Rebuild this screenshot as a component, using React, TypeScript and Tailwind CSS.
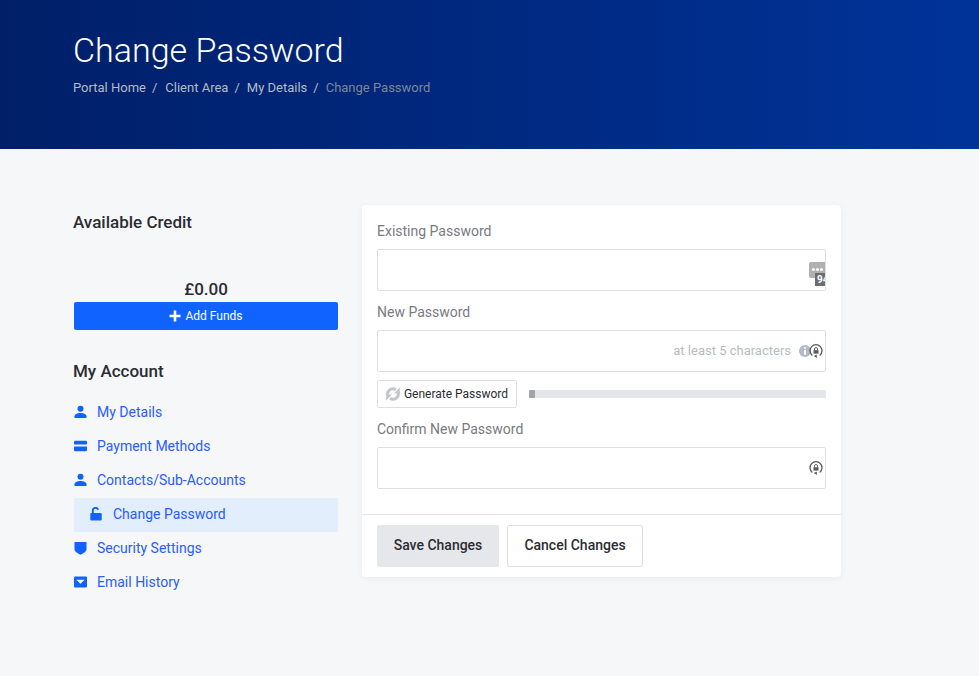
import React from "react";

const Person = () => (
  <svg viewBox="0 0 14 14" className="w-[14px] h-[14px]" fill="currentColor"><circle cx="6.500" cy="3.800" r="3" /><path d="M.5 13v-1.700C.5 9.300 3 8 6.500 8s6 1.300 6 3.300V13z" /></svg>
);
const Card = () => (
  <svg viewBox="0 0 14 14" className="w-[14px] h-[14px]" fill="currentColor"><path d="M1 1.800h11a1 1 0 0 1 1 1V5.500H0V2.800a1 1 0 0 1 1-1zM0 7.500h13v3.700a1 1 0 0 1-1 1H1a1 1 0 0 1-1-1z" /></svg>
);
const Lock = () => (
  <svg viewBox="0 0 12 14" className="w-[12px] h-[14px]" fill="currentColor"><path d="M1.300 6h9.400a1 1 0 0 1 1 1v5.500a1 1 0 0 1-1 1H1.300a1 1 0 0 1-1-1V7a1 1 0 0 1 1-1z" /><path d="M2.800 6V3.600a2.700 2.700 0 0 1 5.300-.8" fill="none" stroke="currentColor" strokeWidth="1.900" /></svg>
);
const Shield = () => (
  <svg viewBox="0 0 14 14" className="w-[14px] h-[14px]" fill="currentColor"><path d="M0.500 1h12v7.500c0 2-3.500 4-6 5.200-2.500-1.200-6-3.200-6-5.200z" /></svg>
);
const Mail = () => (
  <svg viewBox="0 0 14 14" className="w-[14px] h-[14px]" fill="currentColor"><path fillRule="evenodd" d="M1 1.500h11a1 1 0 0 1 1 1v9a1 1 0 0 1-1 1H1a1 1 0 0 1-1-1v-9a1 1 0 0 1 1-1zM2.300 4.800 6.500 8.800l4.200-4z" /></svg>
);
const PwLock = () => (
  <svg viewBox="0 0 14 14" className="w-[14px] h-[14px] text-[#5a5a5a]" fill="none" stroke="currentColor">
    <path d="M3.300 11.400A6 6 0 1 1 10.700 11.400" strokeWidth="1.300" />
    <path d="M7.800 14l-3-2 3-1.600z" fill="currentColor" stroke="none" />
    <path d="M4.500 6.200h5v3.400h-5z" fill="currentColor" stroke="none" />
    <path d="M5.500 6.200V5a1.500 1.500 0 0 1 3 0v1.200" strokeWidth="0.900" />
  </svg>
);

const Nav = ({ icon, label, active }: { icon: React.ReactNode; label: string; active?: boolean }) => (
  <a className={`flex items-center h-[34px] pb-[2px] text-[14px] text-[#2a5cff] ${active ? "bg-[#e2eefc] pl-[16px]" : ""}`}>
    <span className="w-[23px] flex items-center text-[#1063fe]">{icon}</span>
    {label}
  </a>
);

const Label = ({ children }: { children: React.ReactNode }) => (
  <label className="block text-[14px] leading-[20px] text-[#7a7a80]">{children}</label>
);

const Field = ({ children }: { children?: React.ReactNode }) => (
  <div className="relative h-[42px] mt-[8px] border border-[#dddfe2] rounded-[2px] bg-white">{children}</div>
);

export default function App() {
  return (
    <div className="min-h-[676px] bg-[#f6f7f9] font-['Roboto',sans-serif] overflow-hidden">
      <header className="h-[149px] bg-gradient-to-r from-[#001f68] to-[#003399] pl-[73px] pt-[29px]">
        <h1 className="text-[34px] leading-[42px] font-light text-white">Change Password</h1>
        <nav className="mt-[7px] flex text-[13px] leading-[20px] text-[#b5bbc9]">
          <span>Portal Home</span><span className="ml-[6px] mr-[8px]">/</span>
          <span>Client Area</span><span className="ml-[6px] mr-[7px]">/</span>
          <span>My Details</span><span className="ml-[6px] mr-[7px]">/</span>
          <span className="text-[#7d869c]">Change Password</span>
        </nav>
      </header>

      <main className="flex gap-[24px] pl-[74px] pt-[56px]">
        <aside className="w-[264px]">
          <h3 className="text-[17px] leading-[24px] pt-[5px] font-medium text-[#2b2c33] -ml-[1px]">Available Credit</h3>
          <div className="mt-[43px] text-center text-[17px] leading-[24px] font-medium text-[#2b2c33]">£0.00</div>
          <button className="mt-[1px] w-full h-[28px] flex items-center justify-center gap-[4px] rounded-[2px] bg-[#1063fe] text-white text-[12px]">
            <svg viewBox="0 0 12 12" className="w-[12px] h-[12px]" fill="none" stroke="currentColor" strokeWidth="2.600"><path d="M6 0.500v11M0.500 6h11" /></svg>
            Add Funds
          </button>
          <h3 className="mt-[29px] text-[17px] leading-[24px] font-medium text-[#2b2c33] -ml-[1px]">My Account</h3>
          <div className="mt-[13px]">
            <Nav icon={<Person />} label="My Details" />
            <Nav icon={<Card />} label="Payment Methods" />
            <Nav icon={<Person />} label="Contacts/Sub-Accounts" />
            <Nav icon={<Lock />} label="Change Password" active />
            <Nav icon={<Shield />} label="Security Settings" />
            <Nav icon={<Mail />} label="Email History" />
          </div>
        </aside>

        <section className="w-[479px] h-[372px] bg-white rounded-[4px] shadow-[0_1px_6px_rgba(0,0,0,0.06)]">
          <div className="h-[310px] border-b border-[#e5e7ea] px-[15px] pt-[16px]">
            <Label>Existing Password</Label>
            <Field>
              <div className="absolute right-0 top-[12px] w-[16px] h-[16px] rounded-l-[2px] bg-[#b0b0b0] overflow-hidden flex items-start justify-center gap-[1px] pt-[6px] pl-[1px]">
                <i className="w-[3px] h-[3px] bg-white rounded-full" /><i className="w-[3px] h-[3px] bg-white rounded-full" /><i className="w-[3px] h-[3px] bg-white rounded-full" />
              </div>
              <div className="absolute right-0 top-[23px] w-[10px] h-[13px] bg-[#6d6d70] text-white text-[10px] leading-[13px] font-bold overflow-hidden pl-[2px] whitespace-nowrap">94</div>
            </Field>
            <div className="mt-[11px]"><Label>New Password</Label></div>
            <Field>
              <span className="absolute right-[34px] top-[10px] text-[13px] leading-[20px] text-[#b9bcc2]">at least 5 characters</span>
              <svg viewBox="0 0 12 12" className="absolute right-[14px] top-[14px] w-[12px] h-[12px]"><circle cx="6" cy="6" r="6" fill="#b4bac6" /><path d="M5 2.200h2v1.600H5zM5 5h2v4.800H5z" fill="#fff" /></svg>
              <span className="absolute right-[2px] top-[13px]"><PwLock /></span>
            </Field>
            <div className="flex items-center mt-[8px] h-[28px]">
              <button className="h-[28px] w-[140px] flex items-center justify-center gap-[4px] border border-[#dddfe2] rounded-[2px] bg-white text-[12px] text-[#2b2c33]">
                <svg viewBox="0 0 14 14" className="w-[14px] h-[14px]" fill="none" stroke="#c4c6c9" strokeWidth="3"><path d="M1.800 8.500A5.300 5.300 0 0 1 10 2.800" /><path d="M12.200 5.500A5.300 5.300 0 0 1 4 11.200" /><path d="M8 6.500h5.800V0.500zM6 7.500H.2v6z" fill="#c4c6c9" stroke="none" /></svg>
                Generate Password
              </button>
              <div className="ml-[12px] flex-1 h-[8px] rounded-[1px] bg-[#e4e6e9]"><div className="w-[6px] h-[8px] rounded-[1px] bg-[#a2a5aa]" /></div>
            </div>
            <div className="mt-[11px]"><Label>Confirm New Password</Label></div>
            <Field>
              <span className="absolute right-[2px] top-[13px]"><PwLock /></span>
            </Field>
          </div>
          <div className="flex gap-[8px] px-[15px] pt-[10px]">
            <button className="w-[122px] h-[42px] pb-[1px] rounded-[2px] bg-[#e6e7ea] text-[14px] font-medium text-[#2b2c33]">Save Changes</button>
            <button className="w-[136px] h-[42px] pb-[1px] rounded-[2px] border border-[#dddfe2] bg-white text-[14px] font-medium text-[#2b2c33]">Cancel Changes</button>
          </div>
        </section>
      </main>
    </div>
  );
}
